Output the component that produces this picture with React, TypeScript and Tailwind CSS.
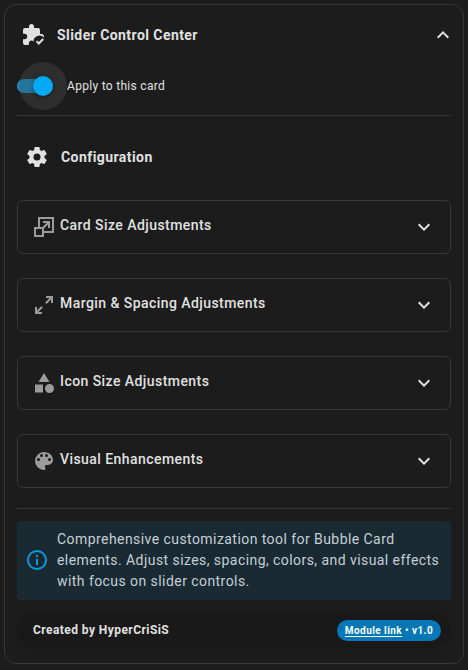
import type { ReactNode } from "react";

const icons = {
  puzzleCheck:
    "M10.5 1A2.5 2.5 0 0 1 13 3.5V5H17A2 2 0 0 1 19 7V11H20.5A2.5 2.5 0 0 1 22.8 14.4A6 6 0 0 0 12.5 18.5A2.7 2.7 0 0 0 7.8 20.5V22H4A2 2 0 0 1 2 20V16.2H3.5A2.7 2.7 0 0 0 3.5 10.8H2V7A2 2 0 0 1 4 5H8V3.5A2.5 2.5 0 0 1 10.5 1M17.75 21.9L14.8 18.7L16.1 17.4L17.75 19.1L21.5 15.3L22.9 16.8L17.75 21.9Z",
  cog: "M12,15.5A3.5,3.5 0 0,1 8.5,12A3.5,3.5 0 0,1 12,8.5A3.5,3.5 0 0,1 15.5,12A3.5,3.5 0 0,1 12,15.5M19.43,12.97C19.47,12.65 19.5,12.33 19.5,12C19.5,11.67 19.47,11.34 19.43,11L21.54,9.37C21.73,9.22 21.78,8.95 21.66,8.73L19.66,5.27C19.54,5.05 19.27,4.96 19.05,5.05L16.56,6.05C16.04,5.66 15.5,5.32 14.87,5.07L14.5,2.42C14.46,2.18 14.25,2 14,2H10C9.75,2 9.54,2.18 9.5,2.42L9.13,5.07C8.5,5.32 7.96,5.66 7.44,6.05L4.95,5.05C4.73,4.96 4.46,5.05 4.34,5.27L2.34,8.73C2.21,8.95 2.27,9.22 2.46,9.37L4.57,11C4.53,11.34 4.5,11.67 4.5,12C4.5,12.33 4.53,12.65 4.57,12.97L2.46,14.63C2.27,14.78 2.21,15.05 2.34,15.27L4.34,18.73C4.46,18.95 4.73,19.03 4.95,18.95L7.44,17.94C7.96,18.34 8.5,18.68 9.13,18.93L9.5,21.58C9.54,21.82 9.75,22 10,22H14C14.25,22 14.46,21.82 14.5,21.58L14.87,18.93C15.5,18.67 16.04,18.34 16.56,17.94L19.05,18.95C19.27,19.03 19.54,18.95 19.66,18.73L21.66,15.27C21.78,15.05 21.73,14.78 21.54,14.63L19.43,12.97Z",
  resize:
    "M10.59,12L14.59,8H11V6H18V13H16V9.41L12,13.41V16H20V4H8V12H10.59M22,2V18H12V22H2V12H6V2H22M10,14H4V20H10V14Z",
  expand:
    "M10,21V19H6.41L10.91,14.5L9.5,13.09L5,17.59V14H3V21H10M14.5,10.91L19,6.41V10H21V3H14V5H17.59L13.09,9.5L14.5,10.91Z",
  shapes:
    "M11,13.5V21.5H3V13.5H11M12,2L17.5,11H6.5L12,2M17.5,13C20,13 22,15 22,17.5C22,20 20,22 17.5,22C15,22 13,20 13,17.5C13,15 15,13 17.5,13Z",
  palette:
    "M17.5,12A1.5,1.5 0 0,1 16,10.5A1.5,1.5 0 0,1 17.5,9A1.5,1.5 0 0,1 19,10.5A1.5,1.5 0 0,1 17.5,12M14.5,8A1.5,1.5 0 0,1 13,6.5A1.5,1.5 0 0,1 14.5,5A1.5,1.5 0 0,1 16,6.5A1.5,1.5 0 0,1 14.5,8M9.5,8A1.5,1.5 0 0,1 8,6.5A1.5,1.5 0 0,1 9.5,5A1.5,1.5 0 0,1 11,6.5A1.5,1.5 0 0,1 9.5,8M6.5,12A1.5,1.5 0 0,1 5,10.5A1.5,1.5 0 0,1 6.5,9A1.5,1.5 0 0,1 8,10.5A1.5,1.5 0 0,1 6.5,12M12,3A9,9 0 0,0 3,12A9,9 0 0,0 12,21A1.5,1.5 0 0,0 13.5,19.5C13.5,19.11 13.35,18.76 13.11,18.5C12.88,18.23 12.73,17.88 12.73,17.5A1.5,1.5 0 0,1 14.23,16H16A5,5 0 0,0 21,11C21,6.58 16.97,3 12,3Z",
  info: "M11,9H13V7H11M12,20C7.59,20 4,16.41 4,12C4,7.59 7.59,4 12,4C16.41,4 20,7.59 20,12C20,16.41 16.41,20 12,20M12,2A10,10 0 0,0 2,12A10,10 0 0,0 12,22A10,10 0 0,0 22,12A10,10 0 0,0 12,2M11,17H13V11H11V17Z",
  down: "M7.41,8.59L12,13.17L16.59,8.59L18,10L12,16L6,10L7.41,8.59Z",
  up: "M7.41,15.41L12,10.83L16.59,15.41L18,14L12,8L6,14L7.41,15.41Z",
};

function Icon({ name, className = "" }: { name: keyof typeof icons; className?: string }) {
  return (
    <svg viewBox="0 0 24 24" className={`size-6 shrink-0 fill-current ${className}`} aria-hidden="true">
      <path d={icons[name]} />
    </svg>
  );
}

function Panel({ icon, children }: { icon: keyof typeof icons; children: ReactNode }) {
  return (
    <button className="flex h-[54px] w-full items-center rounded-md border border-[#363636] pr-3.5 pl-3.5 text-left">
      <Icon name={icon} className="text-[#9b9b9b]" />
      <span className="mb-1 ml-1 grow text-[14px] leading-5 font-medium tracking-[0.4375px]">{children}</span>
      <Icon name="down" />
    </button>
  );
}

export default function App() {
  return (
    <main className="h-[670px] w-[468px] bg-[#1c1c1c] p-1 font-['Roboto',sans-serif] text-[#e1e1e1]">
      <section className="flex h-[660px] w-[460px] flex-col rounded-xl border border-[#363636] px-3">
        <header className="flex h-[60px] items-center pl-1">
          <Icon name="puzzleCheck" />
          <h1 className="ml-3 grow text-[14px] font-bold tracking-[0.4375px]">Slider Control Center</h1>
          <Icon name="up" className="-mr-1" />
        </header>

        <div className="flex h-[42px] items-center">
          <div className="relative h-[14px] w-9 rounded-full bg-[#246f95]">
            <span className="absolute -top-[17px] left-[2px] size-12 rounded-full bg-[#2e2e2e]" />
            <span className="absolute inset-0 rounded-full bg-[#1f9bd6]/65" />
            <span className="absolute -top-[3px] left-4 size-5 rounded-full bg-[#03a9f4] shadow-[0_1px_4px_rgba(0,0,0,0.45)]" />
          </div>
          <span className="relative ml-3.5 text-[12px] tracking-[0.3px]">Apply to this card</span>
        </div>

        <hr className="mt-2 border-[#363636]" />

        <div className="mt-[29px] flex h-6 items-center pl-2">
          <Icon name="cog" />
          <h2 className="ml-3 text-[14px] font-bold tracking-[0.4375px]">Configuration</h2>
        </div>

        <div className="mt-[31px] flex flex-col gap-6">
          <Panel icon="resize">Card Size Adjustments</Panel>
          <Panel icon="expand">Margin &amp; Spacing Adjustments</Panel>
          <Panel icon="shapes">Icon Size Adjustments</Panel>
          <Panel icon="palette">Visual Enhancements</Panel>
        </div>

        <hr className="mt-5 border-[#363636]" />

        <div className="mt-3 flex h-[79px] items-center rounded bg-[#1a2a33] pl-2">
          <Icon name="info" className="mb-0.5 text-[#039be5]" />
          <p className="ml-2 text-[14px] leading-[21px] tracking-[0.4375px] whitespace-nowrap text-[#c3d0d6]">
            Comprehensive customization tool for Bubble Card
            <br />
            elements. Adjust sizes, spacing, colors, and visual effects
            <br />
            with focus on slider controls.
          </p>
        </div>

        <footer className="mt-3 flex h-[37px] items-center justify-between rounded-full bg-[#191919] pr-2.5 pl-4">
          <span className="mb-0.5 text-[12px] font-bold tracking-[0.4375px]">Created by HyperCriSiS</span>
          <span className="flex h-[21px] w-[104px] items-center justify-center rounded-full bg-[#0277b5] text-[10px] font-bold tracking-[0.4375px] whitespace-pre text-white">
            <a className="underline underline-offset-2">Module link</a> • v1.0
          </span>
        </footer>
      </section>
    </main>
  );
}
